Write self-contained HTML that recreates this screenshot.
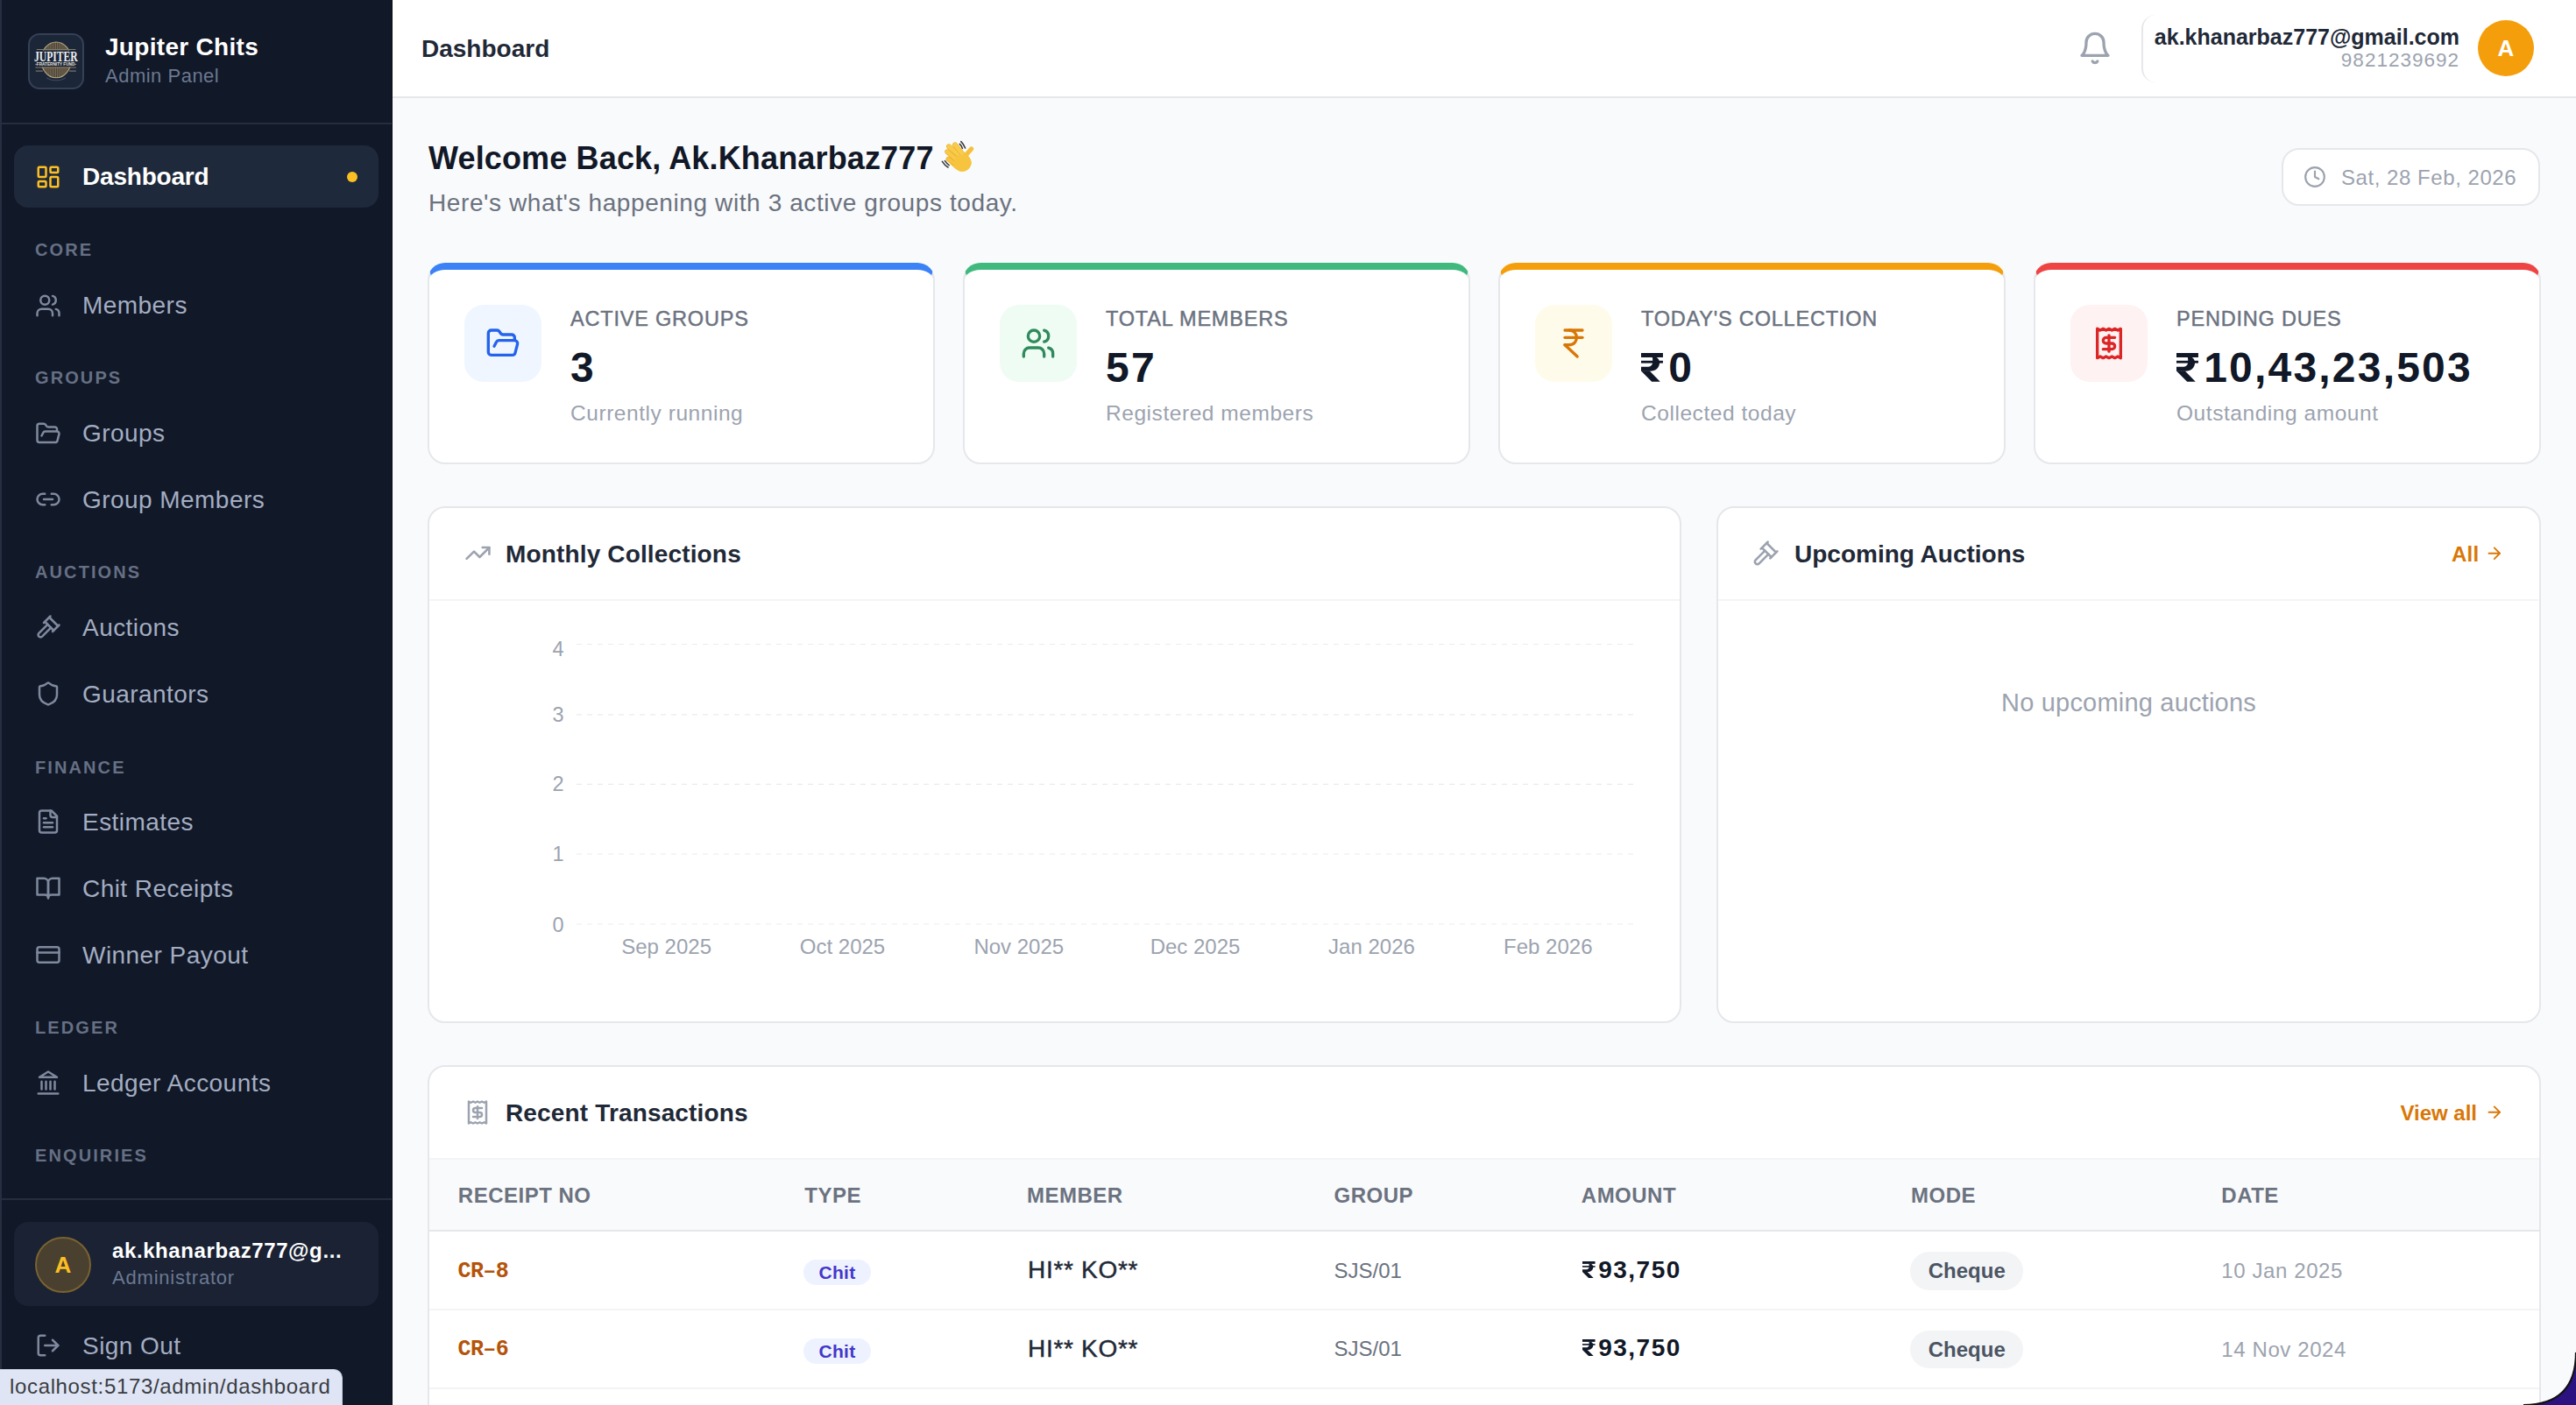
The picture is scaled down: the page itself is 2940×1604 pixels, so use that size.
<!DOCTYPE html>
<html><head><meta charset="utf-8">
<style>
*{box-sizing:border-box;margin:0;padding:0}
html,body{width:2940px;height:1604px;overflow:hidden;background:#f9fafb;font-family:"Liberation Sans",sans-serif}
.abs{position:absolute}
.t{position:absolute;white-space:nowrap}
svg.i{position:absolute;fill:none;stroke:currentColor;stroke-width:2;stroke-linecap:round;stroke-linejoin:round}
svg.inr{display:inline-block;width:0.52em;height:0.68em;vertical-align:baseline;fill:currentColor;margin-right:0.13em}
#sb{position:absolute;left:0;top:0;width:448px;height:1604px;background:#111827}
.sbdiv{position:absolute;left:0;width:448px;height:2px;background:#262d3d}
.nav{position:absolute;left:16px;width:416px;height:71px;border-radius:16px;color:#a3adc2}
.nav svg{left:24px;top:20.5px;width:30px;height:30px;color:#7f899e}
.nav span{position:absolute;left:78px;top:0;line-height:71px;font-size:28px;letter-spacing:0.45px;white-space:nowrap}
.nav.act{background:#1e293b;color:#fff}
.nav.act svg{color:#fbbf24}
.nav.act span{font-weight:700;letter-spacing:-0.2px}
.dot{position:absolute;left:380px;top:29.5px;width:12px;height:12px;border-radius:50%;background:#fbbf24}
.sec{position:absolute;left:40px;font-size:20px;font-weight:700;letter-spacing:2.1px;color:#667085;line-height:20px}
.card{position:absolute;background:#fff;border:2px solid #e5e7eb;border-radius:20px}
</style></head><body>
<div id="sb">
<div class="sbdiv" style="top:140px"></div><div class="sbdiv" style="top:1368px"></div><div class="abs" style="left:0;top:0;width:1.5px;height:1604px;background:#272e40"></div><div class="abs" style="left:446.5px;top:0;width:1.5px;height:1604px;background:#0a0e18"></div>
<div class="abs" style="left:32px;top:38px;width:64px;height:64px;border-radius:13px;background:#1c2639;border:2px solid #364156;overflow:hidden">
<svg width="64" height="64" viewBox="0 0 64 64" style="position:absolute;left:-2px;top:-2px">
<defs><clipPath id="cc"><ellipse cx="32.1" cy="30.4" rx="17" ry="20.3"/></clipPath></defs>
<ellipse cx="32.1" cy="30.4" rx="17" ry="20.3" fill="#463e31"/>
<g clip-path="url(#cc)" stroke="#7f735d" stroke-width="0.9"><line x1="12.5" y1="9" x2="12.5" y2="52"/><line x1="14.4" y1="9" x2="14.4" y2="52"/><line x1="16.3" y1="9" x2="16.3" y2="52"/><line x1="18.2" y1="9" x2="18.2" y2="52"/><line x1="20.1" y1="9" x2="20.1" y2="52"/><line x1="22.0" y1="9" x2="22.0" y2="52"/><line x1="23.9" y1="9" x2="23.9" y2="52"/><line x1="25.8" y1="9" x2="25.8" y2="52"/><line x1="27.7" y1="9" x2="27.7" y2="52"/><line x1="29.6" y1="9" x2="29.6" y2="52"/><line x1="31.5" y1="9" x2="31.5" y2="52"/><line x1="33.4" y1="9" x2="33.4" y2="52"/><line x1="35.3" y1="9" x2="35.3" y2="52"/><line x1="37.2" y1="9" x2="37.2" y2="52"/><line x1="39.1" y1="9" x2="39.1" y2="52"/><line x1="41.0" y1="9" x2="41.0" y2="52"/><line x1="42.9" y1="9" x2="42.9" y2="52"/><line x1="44.8" y1="9" x2="44.8" y2="52"/><line x1="46.7" y1="9" x2="46.7" y2="52"/><line x1="48.6" y1="9" x2="48.6" y2="52"/><line x1="50.5" y1="9" x2="50.5" y2="52"/><line x1="52.4" y1="9" x2="52.4" y2="52"/></g>
<ellipse cx="32.1" cy="30.4" rx="17.1" ry="20.4" fill="none" stroke="#b9ab80" stroke-width="1.1"/>
<rect x="9.8" y="18" width="44.6" height="1" fill="#7f806c"/>
<rect x="6" y="19.6" width="52" height="18.9" fill="#1c2639"/>
<text x="31.9" y="32.4" text-anchor="middle" font-family="Liberation Serif" font-weight="700" font-size="17" fill="#eef0f0" textLength="49.7" lengthAdjust="spacingAndGlyphs">JUPITER</text>
<text x="31.6" y="37" text-anchor="middle" font-family="Liberation Sans" font-weight="700" font-size="4.6" fill="#e4e2dc" textLength="46.6" lengthAdjust="spacingAndGlyphs">-FRATERNITY FUND-</text>
<rect x="8.3" y="38.6" width="46.6" height="0.9" fill="#9c8264"/>
<rect x="8.8" y="42.4" width="8" height="1.4" fill="#6f6c66"/>
<rect x="47" y="42.4" width="7.8" height="1.4" fill="#6f6c66"/>
<path d="M21 51 Q32 57 43 51" stroke="#4f6072" stroke-width="0.7" fill="none"/>
</svg></div>
<div class="t" style="left:120.0px;top:40.3px;font-size:28px;line-height:28px;color:#fff;font-weight:700;letter-spacing:0.3px;">Jupiter Chits</div>
<div class="t" style="left:120.0px;top:76.4px;font-size:22px;line-height:22px;color:#6b7891;font-weight:400;letter-spacing:0.5px;">Admin Panel</div>
<div class="nav act" style="top:166.2px"><svg class="i" viewBox="0 0 24 24" style=""><rect width="7" height="9" x="3" y="3" rx="1"/><rect width="7" height="5" x="14" y="3" rx="1"/><rect width="7" height="9" x="14" y="12" rx="1"/><rect width="7" height="5" x="3" y="16" rx="1"/></svg><span>Dashboard</span><i class="dot"></i></div>
<div class="nav" style="top:313.0px"><svg class="i" viewBox="0 0 24 24" style=""><path d="M16 21v-2a4 4 0 0 0-4-4H6a4 4 0 0 0-4 4v2"/><circle cx="9" cy="7" r="4"/><path d="M22 21v-2a4 4 0 0 0-3-3.87"/><path d="M16 3.13a4 4 0 0 1 0 7.75"/></svg><span>Members</span></div>
<div class="nav" style="top:459.0px"><svg class="i" viewBox="0 0 24 24" style=""><path d="m6 14 1.5-2.9A2 2 0 0 1 9.24 10H20a2 2 0 0 1 1.94 2.5l-1.54 6a2 2 0 0 1-1.95 1.5H4a2 2 0 0 1-2-2V5a2 2 0 0 1 2-2h3.9a2 2 0 0 1 1.69.9l.81 1.2a2 2 0 0 0 1.67.9H18a2 2 0 0 1 2 2v2"/></svg><span>Groups</span></div>
<div class="nav" style="top:534.5px"><svg class="i" viewBox="0 0 24 24" style=""><path d="M9 17H7A5 5 0 0 1 7 7h2"/><path d="M15 7h2a5 5 0 1 1 0 10h-2"/><line x1="8" x2="16" y1="12" y2="12"/></svg><span>Group Members</span></div>
<div class="nav" style="top:680.5px"><svg class="i" viewBox="0 0 24 24" style=""><path d="m14.5 12.5-8 8a2.119 2.119 0 1 1-3-3l8-8"/><path d="m16 16 6-6"/><path d="m8 8 6-6"/><path d="m9 7 8 8"/><path d="m21 11-8-8"/></svg><span>Auctions</span></div>
<div class="nav" style="top:756.5px"><svg class="i" viewBox="0 0 24 24" style=""><path d="M20 13c0 5-3.5 7.5-7.66 8.95a1 1 0 0 1-.67-.01C7.5 20.5 4 18 4 13V6a1 1 0 0 1 1-1c2 0 4.5-1.2 6.24-2.72a1.17 1.17 0 0 1 1.52 0C14.51 3.81 17 5 19 5a1 1 0 0 1 1 1z"/></svg><span>Guarantors</span></div>
<div class="nav" style="top:902.5px"><svg class="i" viewBox="0 0 24 24" style=""><path d="M15 2H6a2 2 0 0 0-2 2v16a2 2 0 0 0 2 2h12a2 2 0 0 0 2-2V7Z"/><path d="M14 2v4a2 2 0 0 0 2 2h4"/><path d="M10 9H8"/><path d="M16 13H8"/><path d="M16 17H8"/></svg><span>Estimates</span></div>
<div class="nav" style="top:978.5px"><svg class="i" viewBox="0 0 24 24" style=""><path d="M2 3h6a4 4 0 0 1 4 4v14a3 3 0 0 0-3-3H2z"/><path d="M22 3h-6a4 4 0 0 0-4 4v14a3 3 0 0 1 3-3h7z"/></svg><span>Chit Receipts</span></div>
<div class="nav" style="top:1054.5px"><svg class="i" viewBox="0 0 24 24" style=""><rect width="20" height="14" x="2" y="5" rx="2"/><line x1="2" x2="22" y1="10" y2="10"/></svg><span>Winner Payout</span></div>
<div class="nav" style="top:1200.5px"><svg class="i" viewBox="0 0 24 24" style=""><line x1="3" x2="21" y1="22" y2="22"/><line x1="6" x2="6" y1="18" y2="11"/><line x1="10" x2="10" y1="18" y2="11"/><line x1="14" x2="14" y1="18" y2="11"/><line x1="18" x2="18" y1="18" y2="11"/><polygon points="12 2 20 7 4 7"/></svg><span>Ledger Accounts</span></div>
<div class="nav" style="top:1500.5px"><svg class="i" viewBox="0 0 24 24" style=""><path d="M9 21H5a2 2 0 0 1-2-2V5a2 2 0 0 1 2-2h4"/><polyline points="16 17 21 12 16 7"/><line x1="21" x2="9" y1="12" y2="12"/></svg><span>Sign Out</span></div>
<div class="sec" style="top:275.2px">CORE</div>
<div class="sec" style="top:421.2px">GROUPS</div>
<div class="sec" style="top:643.2px">AUCTIONS</div>
<div class="sec" style="top:865.5px">FINANCE</div>
<div class="sec" style="top:1163.2px">LEDGER</div>
<div class="sec" style="top:1309.2px">ENQUIRIES</div>
<div class="abs" style="left:16px;top:1395px;width:416px;height:96px;border-radius:16px;background:#1a2233"></div>
<div class="abs" style="left:40px;top:1412px;width:64px;height:64px;border-radius:50%;background:#4a4030;border:2px solid #7a6230;color:#fbbf24;font-weight:700;font-size:26px;line-height:60px;text-align:center">A</div>
<div class="t" style="left:128.0px;top:1415.7px;font-size:24px;line-height:24px;color:#fff;font-weight:700;letter-spacing:0.6px;">ak.khanarbaz777@g...</div>
<div class="t" style="left:128.0px;top:1448.2px;font-size:22px;line-height:22px;color:#6b7891;font-weight:400;letter-spacing:0.8px;">Administrator</div>
<div class="abs" style="left:0;top:1563px;width:391px;height:41px;background:#dfe5f5;border-top-right-radius:10px;border-top:1px solid #c8cfdf;border-right:1px solid #c8cfdf"></div>
<div class="t" style="left:11.0px;top:1570.7px;font-size:24px;line-height:24px;color:#3b3d42;font-weight:400;letter-spacing:0.65px;">localhost:5173/admin/dashboard</div>
</div>
<div class="abs" style="left:448px;top:0;width:2492px;height:112px;background:#fff;border-bottom:2px solid #e5e7eb"></div>
<div class="t" style="left:481.0px;top:41.5px;font-size:28px;line-height:28px;color:#1f2937;font-weight:700;letter-spacing:0px;">Dashboard</div>
<svg class="i" viewBox="0 0 24 24" style="left:2371px;top:35px;width:40px;height:40px;color:#9ca3af"><path d="M6 8a6 6 0 0 1 12 0c0 7 3 9 3 9H3s3-2 3-9"/><path d="M10.3 21a1.94 1.94 0 0 0 3.4 0"/></svg>
<div class="abs" style="left:2444px;top:17px;width:200px;height:77px;border-left:2px solid #e5e7eb;border-radius:16px 0 0 16px"></div>
<div class="t" style="right:133.0px;top:29.8px;font-size:25px;line-height:25px;color:#1f2937;font-weight:700;letter-spacing:0px;">ak.khanarbaz777@gmail.com</div>
<div class="t" style="right:133.0px;top:58.0px;font-size:22.5px;line-height:22.5px;color:#9ca3af;font-weight:400;letter-spacing:1.0px;">9821239692</div>
<div class="abs" style="left:2828px;top:23px;width:64px;height:64px;border-radius:50%;background:#f59e0b;color:#fff;font-weight:700;font-size:26px;line-height:64px;text-align:center">A</div>
<div class="t" style="left:489.0px;top:162.7px;font-size:36px;line-height:36px;color:#111827;font-weight:700;letter-spacing:0.15px;">Welcome Back, Ak.Khanarbaz777</div>
<svg class="abs" style="left:1064px;top:150px;width:60px;height:55px" viewBox="0 0 60 55">
<path d="M26 24 C31 24 36 26 39 25.6 C42 30 44.8 32 44.6 36 C44.2 41 40 45.8 34.4 45.8 C30 45.8 27 43 24 40.5 C21 38 19 36 18.8 33.5 Z" fill="#f7c440"/>
<g stroke-linecap="round" fill="none">
<path d="M18.4 31.6 L27.4 37.8" stroke="#e9ad2a" stroke-width="5.6"/><path d="M18.4 31.6 L27.4 37.8" stroke="#f7c440" stroke-width="4.4"/>
<path d="M17.2 23.2 L29.7 34" stroke="#e9ad2a" stroke-width="5.8"/><path d="M17.2 23.2 L29.7 34" stroke="#f8c846" stroke-width="4.6"/>
<path d="M19 17.2 L31.3 28" stroke="#e9ad2a" stroke-width="5.8"/><path d="M19 17.2 L31.3 28" stroke="#f9cb4a" stroke-width="4.6"/>
<path d="M26 15.2 L35 26.5" stroke="#e9ad2a" stroke-width="5.8"/><path d="M26 15.2 L35 26.5" stroke="#f9cb4a" stroke-width="4.6"/>
<path d="M37.6 28 L44.6 20" stroke="#f6c03c" stroke-width="5.2"/>
</g>
<path d="M29 27 C33 27 37 27 40 26.5 C43 30 44.8 33 44.6 36.5 C44.2 41 40 45.8 34.4 45.8 C30 45.8 27.5 43.5 25 41 C24 37 26 30 29 27 Z" fill="#f7c440"/>
<g stroke="#3c3c3c" stroke-width="1.6" stroke-linecap="round" fill="none">
<path d="M31.3 14.4 Q33.6 16.4 34.4 19.4"/><path d="M32.8 11.6 Q36 14.6 37.6 19"/>
<path d="M11.4 34.4 Q14 38.6 18 41"/><path d="M14.4 33.6 Q16.6 36.8 19.2 38.6"/>
</g>
</svg>
<div class="t" style="left:489.0px;top:218.3px;font-size:28px;line-height:28px;color:#6b7280;font-weight:400;letter-spacing:0.6px;">Here's what's happening with 3 active groups today.</div>
<div class="abs" style="left:2604px;top:169px;width:295px;height:66px;border:2px solid #e5e7eb;border-radius:20px;background:#fff"></div>
<svg class="i" viewBox="0 0 24 24" style="left:2629px;top:189px;width:26px;height:26px;color:#9ca3af"><circle cx="12" cy="12" r="10"/><polyline points="12 6 12 12 16 14"/></svg>
<div class="t" style="left:2672.0px;top:190.7px;font-size:24px;line-height:24px;color:#9ca3af;font-weight:400;letter-spacing:0.55px;">Sat, 28 Feb, 2026</div>
<div class="card" style="left:488px;top:300px;width:579px;height:230px;border-top:8px solid #3b82f6"></div>
<div class="abs" style="left:530px;top:348px;width:88px;height:88px;border-radius:22px;background:#eff6ff"></div>
<svg class="i" viewBox="0 0 24 24" style="left:554px;top:372px;width:40px;height:40px;color:#2563eb"><path d="m6 14 1.5-2.9A2 2 0 0 1 9.24 10H20a2 2 0 0 1 1.94 2.5l-1.54 6a2 2 0 0 1-1.95 1.5H4a2 2 0 0 1-2-2V5a2 2 0 0 1 2-2h3.9a2 2 0 0 1 1.69.9l.81 1.2a2 2 0 0 0 1.67.9H18a2 2 0 0 1 2 2v2"/></svg>
<div class="t" style="left:651.0px;top:352.7px;font-size:23.5px;line-height:23.5px;color:#6b7280;font-weight:400;letter-spacing:0.8px;-webkit-text-stroke:0.45px #6b7280">ACTIVE GROUPS</div>
<div class="t" style="left:651.0px;top:395.7px;font-size:48px;line-height:48px;color:#111827;font-weight:700;letter-spacing:2.2px;">3</div>
<div class="t" style="left:651.0px;top:459.8px;font-size:24.5px;line-height:24.5px;color:#9ca3af;font-weight:400;letter-spacing:0.55px;">Currently running</div>
<div class="card" style="left:1099px;top:300px;width:579px;height:230px;border-top:8px solid #40b97f"></div>
<div class="abs" style="left:1141px;top:348px;width:88px;height:88px;border-radius:22px;background:#effcf4"></div>
<svg class="i" viewBox="0 0 24 24" style="left:1165px;top:372px;width:40px;height:40px;color:#2f8a5c"><path d="M16 21v-2a4 4 0 0 0-4-4H6a4 4 0 0 0-4 4v2"/><circle cx="9" cy="7" r="4"/><path d="M22 21v-2a4 4 0 0 0-3-3.87"/><path d="M16 3.13a4 4 0 0 1 0 7.75"/></svg>
<div class="t" style="left:1262.0px;top:352.7px;font-size:23.5px;line-height:23.5px;color:#6b7280;font-weight:400;letter-spacing:0.8px;-webkit-text-stroke:0.45px #6b7280">TOTAL MEMBERS</div>
<div class="t" style="left:1262.0px;top:395.7px;font-size:48px;line-height:48px;color:#111827;font-weight:700;letter-spacing:2.2px;">57</div>
<div class="t" style="left:1262.0px;top:459.8px;font-size:24.5px;line-height:24.5px;color:#9ca3af;font-weight:400;letter-spacing:0.55px;">Registered members</div>
<div class="card" style="left:1710px;top:300px;width:579px;height:230px;border-top:8px solid #f59e0b"></div>
<div class="abs" style="left:1752px;top:348px;width:88px;height:88px;border-radius:22px;background:#fffbeb"></div>
<svg class="i" viewBox="0 0 24 24" style="left:1776px;top:372px;width:40px;height:40px;color:#d97706"><path d="M6 3h12"/><path d="M6 8h12"/><path d="m6 13 8.5 8"/><path d="M6 13h3"/><path d="M9 13c6.667 0 6.667-10 0-10"/></svg>
<div class="t" style="left:1873.0px;top:352.7px;font-size:23.5px;line-height:23.5px;color:#6b7280;font-weight:400;letter-spacing:0.8px;-webkit-text-stroke:0.45px #6b7280">TODAY'S COLLECTION</div>
<div class="t" style="left:1873.0px;top:395.7px;font-size:48px;line-height:48px;color:#111827;font-weight:700;letter-spacing:2.2px;"><svg class="inr" viewBox="0 0 25 32.7"><rect x="0" y="0" width="25" height="5"/><rect x="0" y="8.8" width="25" height="2.8"/><path d="M12.8 5C13.4 6.5 13.2 8.8 13.1 11C13 14 10.5 15.9 7 15.9H0V20.8H9.8C17 20.8 21.1 16.5 21.1 11C21.1 8.5 19.8 6.2 17.6 5Z"/><polygon points="0,20.6 12.2,32.7 21.8,32.7 9.8,20.6"/></svg>0</div>
<div class="t" style="left:1873.0px;top:459.8px;font-size:24.5px;line-height:24.5px;color:#9ca3af;font-weight:400;letter-spacing:0.55px;">Collected today</div>
<div class="card" style="left:2321px;top:300px;width:579px;height:230px;border-top:8px solid #ef4444"></div>
<div class="abs" style="left:2363px;top:348px;width:88px;height:88px;border-radius:22px;background:#fef2f2"></div>
<svg class="i" viewBox="0 0 24 24" style="left:2387px;top:372px;width:40px;height:40px;color:#dc2626"><path d="M4 2v20l2-1 2 1 2-1 2 1 2-1 2 1 2-1 2 1V2l-2 1-2-1-2 1-2-1-2 1-2-1-2 1Z"/><path d="M16 8h-6a2 2 0 1 0 0 4h4a2 2 0 1 1 0 4H8"/><path d="M12 17.5v-11"/></svg>
<div class="t" style="left:2484.0px;top:352.7px;font-size:23.5px;line-height:23.5px;color:#6b7280;font-weight:400;letter-spacing:0.8px;-webkit-text-stroke:0.45px #6b7280">PENDING DUES</div>
<div class="t" style="left:2484.0px;top:395.7px;font-size:48px;line-height:48px;color:#111827;font-weight:700;letter-spacing:2.2px;"><svg class="inr" viewBox="0 0 25 32.7"><rect x="0" y="0" width="25" height="5"/><rect x="0" y="8.8" width="25" height="2.8"/><path d="M12.8 5C13.4 6.5 13.2 8.8 13.1 11C13 14 10.5 15.9 7 15.9H0V20.8H9.8C17 20.8 21.1 16.5 21.1 11C21.1 8.5 19.8 6.2 17.6 5Z"/><polygon points="0,20.6 12.2,32.7 21.8,32.7 9.8,20.6"/></svg>10,43,23,503</div>
<div class="t" style="left:2484.0px;top:459.8px;font-size:24.5px;line-height:24.5px;color:#9ca3af;font-weight:400;letter-spacing:0.55px;">Outstanding amount</div>
<div class="card" style="left:488px;top:578px;width:1431px;height:590px"></div>
<div class="abs" style="left:490px;top:684px;width:1427px;height:2px;background:#f3f4f6"></div>
<svg class="i" viewBox="0 0 24 24" style="left:530px;top:616px;width:31px;height:31px;color:#9ca3af"><polyline points="22 7 13.5 15.5 8.5 10.5 2 17"/><polyline points="16 7 22 7 22 13"/></svg>
<div class="t" style="left:577.0px;top:618.9px;font-size:28px;line-height:28px;color:#1f2937;font-weight:700;letter-spacing:0.15px;">Monthly Collections</div>
<svg class="abs" style="left:0;top:0;width:2940px;height:1604px;pointer-events:none" viewBox="0 0 2940 1604"><g stroke="#e9ebee" stroke-width="1.2" stroke-dasharray="6 6"><line x1="658" x2="1867" y1="735.5" y2="735.5"/><line x1="658" x2="1867" y1="815.8" y2="815.8"/><line x1="658" x2="1867" y1="895.4" y2="895.4"/><line x1="658" x2="1867" y1="975" y2="975"/><line x1="658" x2="1867" y1="1055" y2="1055"/></g></svg>
<div class="t" style="right:2296.5px;top:730.4px;font-size:23.5px;line-height:23.5px;color:#9ca3af;font-weight:400;letter-spacing:0px;">4</div>
<div class="t" style="right:2296.5px;top:805.1px;font-size:23.5px;line-height:23.5px;color:#9ca3af;font-weight:400;letter-spacing:0px;">3</div>
<div class="t" style="right:2296.5px;top:884.4px;font-size:23.5px;line-height:23.5px;color:#9ca3af;font-weight:400;letter-spacing:0px;">2</div>
<div class="t" style="right:2296.5px;top:964.4px;font-size:23.5px;line-height:23.5px;color:#9ca3af;font-weight:400;letter-spacing:0px;">1</div>
<div class="t" style="right:2296.5px;top:1044.8px;font-size:23.5px;line-height:23.5px;color:#9ca3af;font-weight:400;letter-spacing:0px;">0</div>
<div class="t" style="left:-239.4px;width:2000px;text-align:center;top:1068.7px;font-size:24px;line-height:24px;color:#9ca3af;font-weight:400;letter-spacing:0px;">Sep 2025</div>
<div class="t" style="left:-38.5px;width:2000px;text-align:center;top:1068.7px;font-size:24px;line-height:24px;color:#9ca3af;font-weight:400;letter-spacing:0px;">Oct 2025</div>
<div class="t" style="left:162.8px;width:2000px;text-align:center;top:1068.7px;font-size:24px;line-height:24px;color:#9ca3af;font-weight:400;letter-spacing:0px;">Nov 2025</div>
<div class="t" style="left:364.0px;width:2000px;text-align:center;top:1068.7px;font-size:24px;line-height:24px;color:#9ca3af;font-weight:400;letter-spacing:0px;">Dec 2025</div>
<div class="t" style="left:565.5px;width:2000px;text-align:center;top:1068.7px;font-size:24px;line-height:24px;color:#9ca3af;font-weight:400;letter-spacing:0px;">Jan 2026</div>
<div class="t" style="left:766.8px;width:2000px;text-align:center;top:1068.7px;font-size:24px;line-height:24px;color:#9ca3af;font-weight:400;letter-spacing:0px;">Feb 2026</div>
<div class="card" style="left:1959px;top:578px;width:941px;height:590px"></div>
<div class="abs" style="left:1961px;top:684px;width:936px;height:2px;background:#f3f4f6"></div>
<svg class="i" viewBox="0 0 24 24" style="left:1999px;top:616px;width:32px;height:32px;color:#9ca3af"><path d="m14.5 12.5-8 8a2.119 2.119 0 1 1-3-3l8-8"/><path d="m16 16 6-6"/><path d="m8 8 6-6"/><path d="m9 7 8 8"/><path d="m21 11-8-8"/></svg>
<div class="t" style="left:2048.0px;top:619.3px;font-size:28px;line-height:28px;color:#1f2937;font-weight:700;letter-spacing:0px;">Upcoming Auctions</div>
<div class="t" style="left:2798.0px;top:620.5px;font-size:24px;line-height:24px;color:#d97706;font-weight:700;letter-spacing:0.2px;">All</div>
<svg class="i" viewBox="0 0 24 24" style="left:2836.4px;top:621.4px;width:21.5px;height:21.5px;color:#d97706"><path d="M5 12h14"/><path d="m12 5 7 7-7 7"/></svg>
<div class="t" style="left:1429.5px;width:2000px;text-align:center;top:788.1px;font-size:29px;line-height:29px;color:#9ca3af;font-weight:400;letter-spacing:0.2px;">No upcoming auctions</div>
<div class="card" style="left:488px;top:1216px;width:2412px;height:500px"></div>
<svg class="i" viewBox="0 0 24 24" style="left:530px;top:1255px;width:30px;height:30px;color:#9ca3af"><path d="M4 2v20l2-1 2 1 2-1 2 1 2-1 2 1 2-1 2 1V2l-2 1-2-1-2 1-2-1-2 1-2-1-2 1Z"/><path d="M16 8h-6a2 2 0 1 0 0 4h4a2 2 0 1 1 0 4H8"/><path d="M12 17.5v-11"/></svg>
<div class="t" style="left:577.0px;top:1256.7px;font-size:28px;line-height:28px;color:#1f2937;font-weight:700;letter-spacing:0.15px;">Recent Transactions</div>
<div class="t" style="right:113.0px;top:1258.5px;font-size:24px;line-height:24px;color:#d97706;font-weight:700;letter-spacing:0px;">View all</div>
<svg class="i" viewBox="0 0 24 24" style="left:2836.3px;top:1259.4px;width:21.5px;height:21.5px;color:#d97706"><path d="M5 12h14"/><path d="m12 5 7 7-7 7"/></svg>
<div class="abs" style="left:490px;top:1322px;width:2408px;height:84px;background:#f9fafb;border-top:2px solid #f3f4f6;border-bottom:2px solid #e5e7eb"></div>
<div class="t" style="left:522.8px;top:1353.1px;font-size:24px;line-height:24px;color:#6b7280;font-weight:700;letter-spacing:0.5px;">RECEIPT NO</div>
<div class="t" style="left:918.3px;top:1353.1px;font-size:24px;line-height:24px;color:#6b7280;font-weight:700;letter-spacing:0.5px;">TYPE</div>
<div class="t" style="left:1172.0px;top:1353.1px;font-size:24px;line-height:24px;color:#6b7280;font-weight:700;letter-spacing:0.5px;">MEMBER</div>
<div class="t" style="left:1522.5px;top:1353.1px;font-size:24px;line-height:24px;color:#6b7280;font-weight:700;letter-spacing:0.5px;">GROUP</div>
<div class="t" style="left:1804.8px;top:1353.1px;font-size:24px;line-height:24px;color:#6b7280;font-weight:700;letter-spacing:0.5px;">AMOUNT</div>
<div class="t" style="left:2181.0px;top:1353.1px;font-size:24px;line-height:24px;color:#6b7280;font-weight:700;letter-spacing:0.5px;">MODE</div>
<div class="t" style="left:2535.3px;top:1353.1px;font-size:24px;line-height:24px;color:#6b7280;font-weight:700;letter-spacing:0.5px;">DATE</div>
<div class="abs" style="left:490px;top:1494px;width:2408px;height:2px;background:#f3f4f6"></div>
<div class="t" style="left:522.5px;top:1438.8px;font-size:25px;line-height:25px;color:#b45309;font-weight:700;letter-spacing:-0.6px;font-family:'Liberation Mono';">CR&#8211;8</div>
<div class="abs" style="left:917px;top:1438.4px;width:77px;height:29px;border-radius:15px;background:#eef2ff"></div>
<div class="t" style="left:-44.5px;width:2000px;text-align:center;top:1442.1px;font-size:21px;line-height:21px;color:#4338ca;font-weight:700;letter-spacing:0.3px;">Chit</div>
<div class="t" style="left:1173.0px;top:1436.0px;font-size:28px;line-height:28px;color:#1f2937;font-weight:400;letter-spacing:0.7px;-webkit-text-stroke:0.4px #1f2937">HI** KO**</div>
<div class="t" style="left:1522.5px;top:1438.8px;font-size:24px;line-height:24px;color:#6b7280;font-weight:400;letter-spacing:0px;">SJS/01</div>
<div class="t" style="left:1806.0px;top:1435.9px;font-size:28px;line-height:28px;color:#111827;font-weight:700;letter-spacing:1.5px;"><svg class="inr" viewBox="0 0 25 32.7"><rect x="0" y="0" width="25" height="5"/><rect x="0" y="8.8" width="25" height="2.8"/><path d="M12.8 5C13.4 6.5 13.2 8.8 13.1 11C13 14 10.5 15.9 7 15.9H0V20.8H9.8C17 20.8 21.1 16.5 21.1 11C21.1 8.5 19.8 6.2 17.6 5Z"/><polygon points="0,20.6 12.2,32.7 21.8,32.7 9.8,20.6"/></svg>93,750</div>
<div class="abs" style="left:2180px;top:1429.3px;width:128.5px;height:43.5px;border-radius:22px;background:#f3f4f6"></div>
<div class="t" style="left:1244.8px;width:2000px;text-align:center;top:1439.4px;font-size:24px;line-height:24px;color:#4b5563;font-weight:700;letter-spacing:0px;">Cheque</div>
<div class="t" style="left:2535.3px;top:1439.0px;font-size:24px;line-height:24px;color:#9ca3af;font-weight:400;letter-spacing:0.6px;">10 Jan 2025</div>
<div class="abs" style="left:490px;top:1583.5px;width:2408px;height:2px;background:#f3f4f6"></div>
<div class="t" style="left:522.5px;top:1528.3px;font-size:25px;line-height:25px;color:#b45309;font-weight:700;letter-spacing:-0.6px;font-family:'Liberation Mono';">CR&#8211;6</div>
<div class="abs" style="left:917px;top:1527.9px;width:77px;height:29px;border-radius:15px;background:#eef2ff"></div>
<div class="t" style="left:-44.5px;width:2000px;text-align:center;top:1531.6px;font-size:21px;line-height:21px;color:#4338ca;font-weight:700;letter-spacing:0.3px;">Chit</div>
<div class="t" style="left:1173.0px;top:1525.5px;font-size:28px;line-height:28px;color:#1f2937;font-weight:400;letter-spacing:0.7px;-webkit-text-stroke:0.4px #1f2937">HI** KO**</div>
<div class="t" style="left:1522.5px;top:1528.3px;font-size:24px;line-height:24px;color:#6b7280;font-weight:400;letter-spacing:0px;">SJS/01</div>
<div class="t" style="left:1806.0px;top:1525.4px;font-size:28px;line-height:28px;color:#111827;font-weight:700;letter-spacing:1.5px;"><svg class="inr" viewBox="0 0 25 32.7"><rect x="0" y="0" width="25" height="5"/><rect x="0" y="8.8" width="25" height="2.8"/><path d="M12.8 5C13.4 6.5 13.2 8.8 13.1 11C13 14 10.5 15.9 7 15.9H0V20.8H9.8C17 20.8 21.1 16.5 21.1 11C21.1 8.5 19.8 6.2 17.6 5Z"/><polygon points="0,20.6 12.2,32.7 21.8,32.7 9.8,20.6"/></svg>93,750</div>
<div class="abs" style="left:2180px;top:1518.8px;width:128.5px;height:43.5px;border-radius:22px;background:#f3f4f6"></div>
<div class="t" style="left:1244.8px;width:2000px;text-align:center;top:1528.9px;font-size:24px;line-height:24px;color:#4b5563;font-weight:700;letter-spacing:0px;">Cheque</div>
<div class="t" style="left:2535.3px;top:1528.5px;font-size:24px;line-height:24px;color:#9ca3af;font-weight:400;letter-spacing:0.6px;">14 Nov 2024</div>
<svg class="abs" style="left:2878px;top:1542px;width:62px;height:62px" viewBox="0 0 62 62"><path d="M62 0 V62 H0 Q 62 62 62 0Z" fill="#2b1280"/><path d="M62 2 Q 62 62 2 62" fill="none" stroke="#111" stroke-width="2.2"/></svg>
</body></html>
